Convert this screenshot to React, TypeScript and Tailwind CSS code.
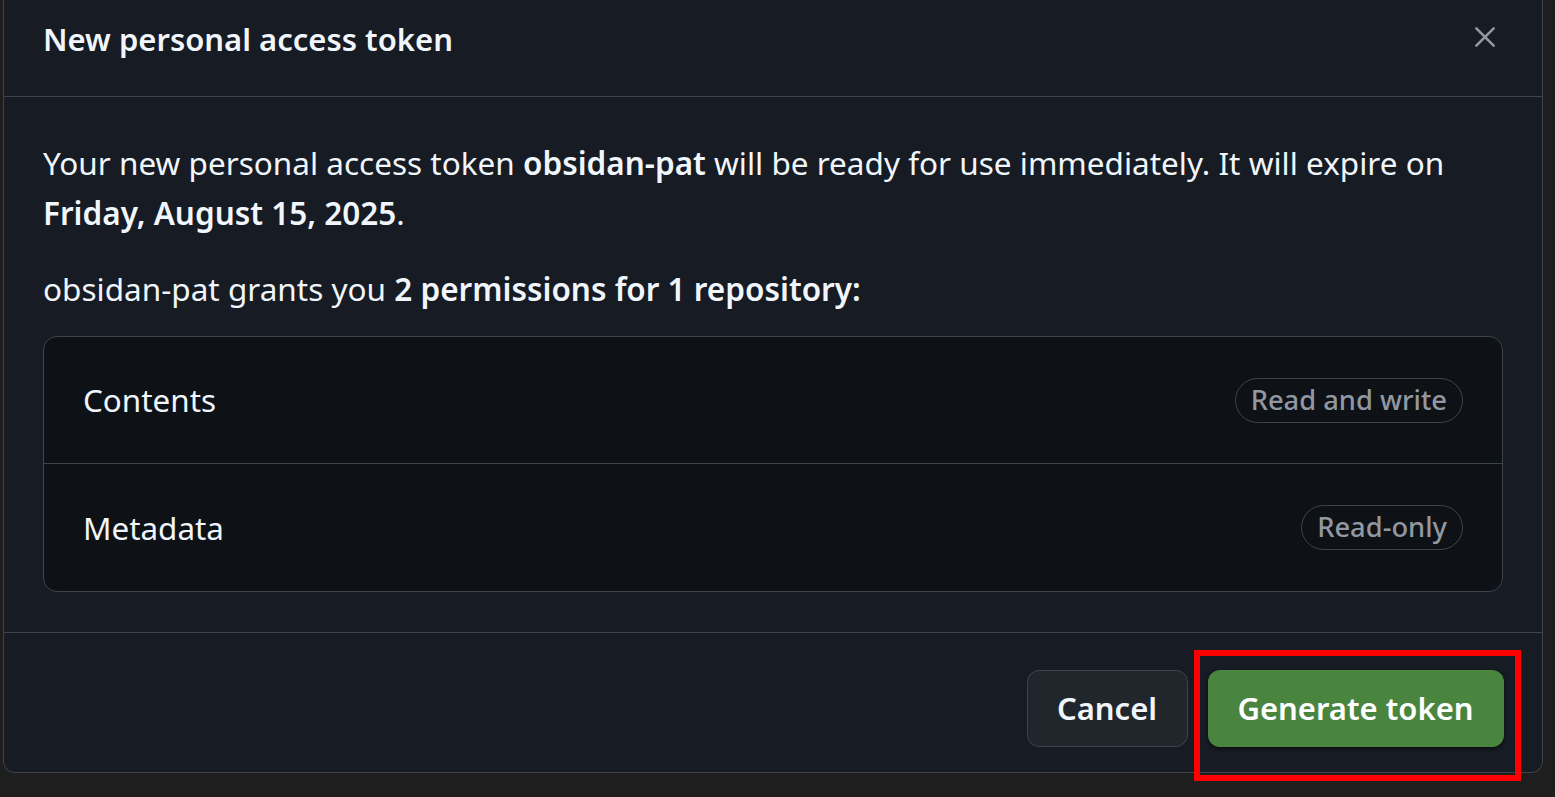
import React from 'react';

const font = { fontFamily: '"Noto Sans", "Open Sans", sans-serif' };

const Badge: React.FC<{ label: string }> = ({ label }) => (
  <span className="h-[45px] px-[15px] flex items-center rounded-full border-[1.5px] border-[#3d444d] text-[27.3px] text-[#9198a1] font-medium">
    {label}
  </span>
);

const PermissionRow: React.FC<{ name: string; access: string; last?: boolean }> = ({ name, access, last }) => (
  <div className={`h-[127px] flex items-center justify-between pl-[39px] pr-[39px] ${last ? '' : 'border-b-[1.5px] border-[#3d444d]'}`}>
    <span className="text-[31.4px] text-[#f0f6fc]">{name}</span>
    <Badge label={access} />
  </div>
);

export default function App() {
  return (
    <div className="relative w-[1555px] h-[797px] bg-[#1e1e1e] overflow-hidden" style={font}>
      <div className="ml-[3px] w-[1540px] h-[773px] bg-[#171b23] border-x-[1.5px] border-b-[1.5px] border-[#3d444d] rounded-b-[12px] flex flex-col text-[#f0f6fc]">
        <div className="h-[97px] flex items-center justify-between pl-[39px] pr-[44px] pb-[17px] border-b-[1.5px] border-[#3d444d]">
          <h1 className="text-[31px] font-semibold">New personal access token</h1>
          <svg className="-mt-[5px]" width="26" height="26" viewBox="0 0 24 24" fill="none" stroke="#9198a1" strokeWidth="2.4" strokeLinecap="round">
            <path d="M4 4l16 16M20 4L4 20" />
          </svg>
        </div>

        <div className="px-[39px] pt-[41px] pb-[40px] border-b-[1.5px] border-[#3d444d]">
          <p className="text-[31.5px] leading-[50px]">
            Your new personal access token <b className="font-semibold">obsidan-pat</b> will be ready for use immediately. It will expire on{' '}
            <b className="font-semibold">Friday, August 15, 2025</b>.
          </p>
          <p className="mt-[26px] text-[31.5px] leading-[50px]">
            obsidan-pat grants you <b className="font-semibold">2 permissions for 1 repository:</b>
          </p>
          <div className="mt-[22px] rounded-[14px] border-[1.5px] border-[#3d444d] bg-[#0e1116]">
            <PermissionRow name="Contents" access="Read and write" />
            <PermissionRow name="Metadata" access="Read-only" last />
          </div>
        </div>

        <div className="flex justify-end gap-[20px] pt-[37px] pr-[38.5px]">
          <button className="h-[77px] w-[161px] rounded-[12px] bg-[#21262d] border-[1.5px] border-[#3d444d] text-[31px] font-semibold text-[#f0f6fc]">
            Cancel
          </button>
          <button className="h-[77px] w-[296px] rounded-[12px] bg-[#4a853f] text-[31px] font-semibold text-white shadow-[0_2px_4px_rgba(0,0,0,0.5)]">
            Generate token
          </button>
        </div>
      </div>

      <div className="absolute left-[1194px] top-[650px] w-[327px] h-[131px] border-[6px] border-[#ff0000]" />
    </div>
  );
}
